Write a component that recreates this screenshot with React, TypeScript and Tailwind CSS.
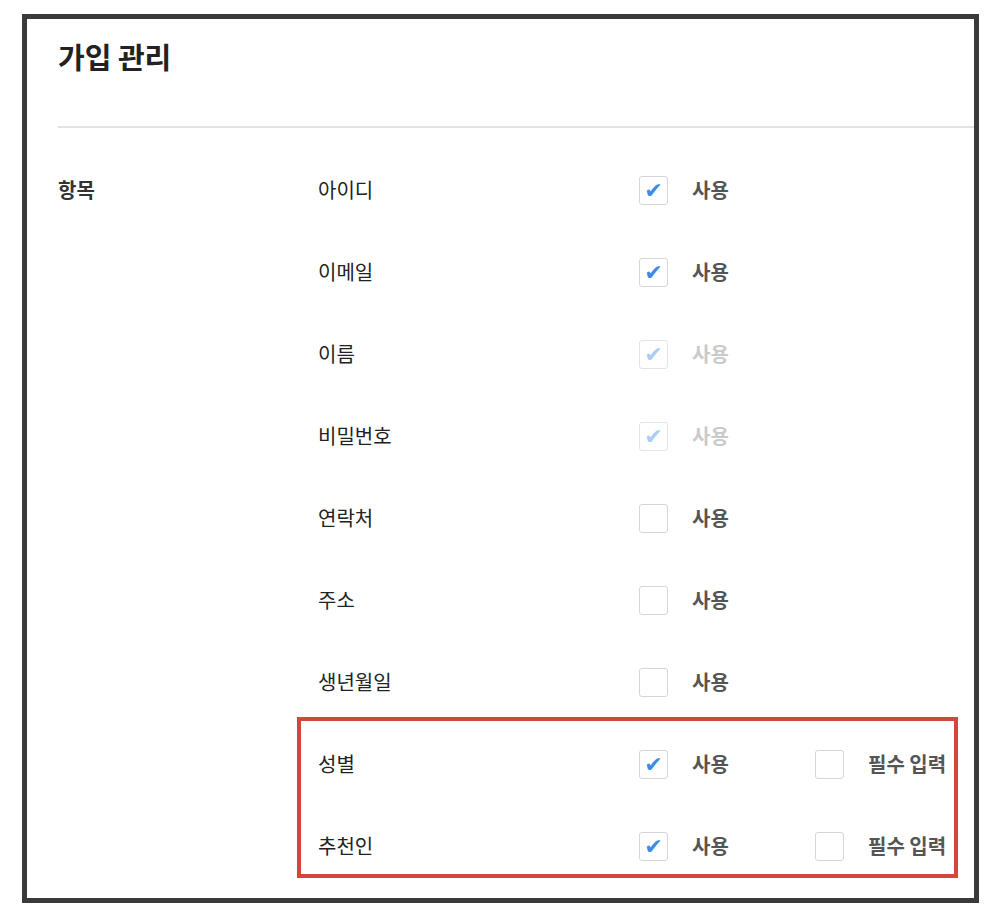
import React from "react";

type Field = {
  label: string;
  checked: boolean;
  disabled?: boolean;
};

const fields: Field[] = [
  { label: "아이디", checked: true },
  { label: "이메일", checked: true },
  { label: "이름", checked: true, disabled: true },
  { label: "비밀번호", checked: true, disabled: true },
  { label: "연락처", checked: false },
  { label: "주소", checked: false },
  { label: "생년월일", checked: false },
];

const highlighted = [{ label: "성별" }, { label: "추천인" }];

const Checkbox: React.FC<{ checked: boolean; disabled?: boolean }> = ({
  checked,
  disabled,
}) => (
  <div
    className={
      disabled
        ? "w-[29px] h-[29px] rounded-[3px] border border-[#e4e4e4] bg-white flex items-center justify-center"
        : "w-[29px] h-[29px] rounded-[3px] border border-[#d6d6d6] bg-white flex items-center justify-center"
    }
  >
    {checked && (
      <span
        className={
          disabled
            ? "text-[22px] leading-none text-[#a9cdf3] font-['DejaVu_Sans',sans-serif] mt-[2px]"
            : "text-[22px] leading-none text-[#3b8de3] font-['DejaVu_Sans',sans-serif] mt-[2px]"
        }
      >
        ✔
      </span>
    )}
  </div>
);

const Option: React.FC<{
  text: string;
  checked: boolean;
  disabled?: boolean;
  className?: string;
}> = ({ text, checked, disabled, className }) => (
  <div className={"flex items-center " + (className ?? "")}>
    <Checkbox checked={checked} disabled={disabled} />
    <span
      className={
        disabled
          ? "ml-[24px] text-[20px] font-bold text-[#cacaca]"
          : "ml-[24px] text-[20px] font-bold text-[#555555]"
      }
    >
      {text}
    </span>
  </div>
);

const App: React.FC = () => {
  return (
    <div className="min-h-[915px] bg-white pt-[14px] pl-[22px] font-['Noto_Sans_CJK_KR','Noto_Sans',sans-serif]">
      <div className="w-[957px] h-[889px] border-[5px] border-[#3a3a3a] bg-white pl-[31px]">
        <div className="h-[107px] pt-[17px]">
          <h1 className="text-[29px] leading-[40px] font-bold text-[#222222]">
            가입 관리
          </h1>
        </div>
        <div className="h-[2px] bg-[#e3e3e3]" />

        <div className="flex mt-[21px]">
          <div className="w-[260px]">
            <div className="h-[82px] flex items-center">
              <span className="text-[20px] font-bold text-[#333333]">
                항목
              </span>
            </div>
          </div>

          <div className="flex flex-col">
            {fields.map((f) => (
              <div key={f.label} className="h-[82px] flex items-center">
                <span className="w-[321px] text-[20px] text-[#222222]">
                  {f.label}
                </span>
                <Option text="사용" checked={f.checked} disabled={f.disabled} />
              </div>
            ))}

            <div className="-ml-[21px] -mt-[6px] w-[661px] border-4 border-[#d3463c] pl-[17px] pt-[2px]">
              {highlighted.map((f, i) => (
                <div
                  key={f.label}
                  className={
                    i === highlighted.length - 1
                      ? "h-[82px] -mb-[13px] flex items-center"
                      : "h-[82px] flex items-center"
                  }
                >
                  <span className="w-[321px] text-[20px] text-[#222222]">
                    {f.label}
                  </span>
                  <Option text="사용" checked className="w-[176px]" />
                  <Option text="필수 입력" checked={false} />
                </div>
              ))}
            </div>
          </div>
        </div>
      </div>
    </div>
  );
};

export default App;
